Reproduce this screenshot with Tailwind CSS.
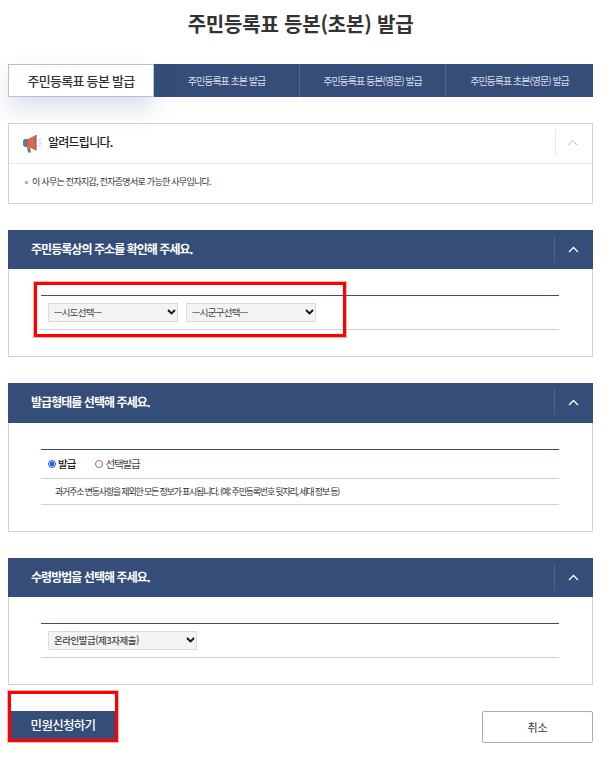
<!DOCTYPE html>
<html lang="ko">
<head>
  <meta charset="UTF-8">
  <title>주민등록표 등본(초본) 발급</title>
  <script src="https://cdn.jsdelivr.net/npm/@tailwindcss/browser@4"></script>
</head>
<body class="bg-white overflow-hidden font-['Noto_Sans_CJK_KR','Noto_Sans',sans-serif] text-[#222]">
  <div class="relative w-[616px] h-[760px] pl-2 pr-[23px]">
    <h1 class="h-[64px] pt-[7px] text-center text-[20px] leading-[34px] font-bold tracking-[-0.2px] text-[#333]">주민등록표 등본(초본) 발급</h1>

    <!-- tabs -->
    <div class="flex h-[33px] bg-[#344d79] text-[10px] tracking-[-1px] text-[#d8dee9]">
      <div class="w-[146px] flex items-center justify-center bg-white border border-[#b2c2de] text-[13px] font-medium tracking-[-0.7px] text-[#333] shadow-[0_12px_24px_rgba(52,77,121,0.18)]">주민등록표 등본 발급</div>
      <div class="w-[146px] flex items-center justify-center border-r border-[#4d6590]">주민등록표 초본 발급</div>
      <div class="w-[146px] flex items-center justify-center border-r border-[#4d6590]">주민등록표 등본(영문) 발급</div>
      <div class="flex-1 flex items-center justify-center">주민등록표 초본(영문) 발급</div>
    </div>

    <!-- notice -->
    <div class="mt-[26px] h-[81px] border border-[#d2d2d2]">
      <div class="h-[40px] flex items-center border-b border-[#e8e8e8]">
        <svg class="ml-[13px] w-[21px] h-[20px]" viewBox="0 0 21 20">
          <path d="M1 7.5 C1 6 2 5 3.5 5 L6 5 L6 13 L3.5 13 C2 13 1 12 1 10.5 Z" fill="#6d7683"/>
          <path d="M6 5 L13 1.5 L13 16 L6 13 Z" fill="#e8633f"/>
          <path d="M13 1 L14.6 1 L14.6 16.5 L13 16.5 Z" fill="#6d7683"/>
          <path d="M5 13 L8 13.5 L9 18.5 L6 18.5 Z" fill="#6d7683"/>
          <path d="M16.5 6.5 L19 5 M17 9 L20 9 M16.5 11.5 L19 13" stroke="#c4c8ce" stroke-width="1" fill="none"/>
        </svg>
        <span class="ml-[5px] -mt-[3px] text-[12px] font-medium tracking-[-0.75px]">알려드립니다.</span>
        <div class="ml-auto flex items-center h-[26px] w-[37px] border-l border-[#e8e8e8] justify-center pr-[3px] -mt-[2px]">
          <svg class="w-[11px] h-[7px]" viewBox="0 0 11 7"><path d="M1 6 L5.5 1.5 L10 6" fill="none" stroke="#bdbdbd" stroke-width="1"/></svg>
        </div>
      </div>
      <div class="pl-[16px] pt-[11px] flex items-center text-[9px] leading-[14px] tracking-[-0.72px] text-[#333]">
        <span class="w-[3px] h-[3px] bg-[#b5b5b5] mr-[4px]"></span>이 사무는 전자지갑, 전자증명서로 가능한 사무입니다.
      </div>
    </div>

    <!-- address -->
    <section class="mt-[26px] h-[127px] border-x border-b border-[#d2d2d2]">
      <div class="-mx-px h-[39px] flex items-center bg-[#344d79] text-white">
        <h2 class="pl-[23px] -mt-[1px] text-[12px] font-bold tracking-[-0.95px]">주민등록상의 주소를 확인해 주세요.</h2>
        <div class="ml-auto flex items-center justify-center h-[26px] w-[39px] border-l border-[#4d6590] pr-[2px]">
          <svg class="w-[11px] h-[7px]" viewBox="0 0 11 7"><path d="M1 6 L5.5 1.5 L10 6" fill="none" stroke="#fff" stroke-width="1.3"/></svg>
        </div>
      </div>
      <div class="ml-[32px] mr-[33px] mt-[26px] border-t border-[#344d79]">
        <div class="h-[34px] flex items-start gap-2 pt-[7px] pl-[7px] border-b border-[#d2d2d2]">
          <div class="relative w-[130px] h-[19px]">
            <select class="block appearance-none w-full h-full bg-[#f3f3f3] border border-[#dcdcdc] text-[9.5px] tracking-[-0.75px] text-[#444] pl-[5px]"><option>---시도선택---</option></select>
            <svg class="absolute right-[2px] top-[6px] w-[9px] h-[6px] pointer-events-none" viewBox="0 0 9 6"><path d="M1 1 L4.5 4.5 L8 1" fill="none" stroke="#111" stroke-width="1.8"/></svg>
          </div>
          <div class="relative w-[130px] h-[19px]">
            <select class="block appearance-none w-full h-full bg-[#f3f3f3] border border-[#dcdcdc] text-[9.5px] tracking-[-0.75px] text-[#444] pl-[5px]"><option>---시군구선택---</option></select>
            <svg class="absolute right-[2px] top-[6px] w-[9px] h-[6px] pointer-events-none" viewBox="0 0 9 6"><path d="M1 1 L4.5 4.5 L8 1" fill="none" stroke="#111" stroke-width="1.8"/></svg>
          </div>
        </div>
      </div>
    </section>

    <!-- issue type -->
    <section class="mt-[26px] h-[149px] border-x border-b border-[#d2d2d2]">
      <div class="-mx-px h-[40px] flex items-center bg-[#344d79] text-white">
        <h2 class="pl-[23px] -mt-[2px] text-[12px] font-bold tracking-[-0.95px]">발급형태를 선택해 주세요.</h2>
        <div class="ml-auto flex items-center justify-center h-[26px] w-[39px] border-l border-[#4d6590] pr-[2px] -mt-[2px]">
          <svg class="w-[11px] h-[7px]" viewBox="0 0 11 7"><path d="M1 6 L5.5 1.5 L10 6" fill="none" stroke="#fff" stroke-width="1.3"/></svg>
        </div>
      </div>
      <div class="ml-[32px] mr-[33px] mt-[26px] border-t border-[#344d79]">
        <div class="h-[29px] flex items-center pl-[7px] border-b border-[#d2d2d2] text-[10.5px] tracking-[-0.9px]">
          <input type="radio" name="kind" checked class="w-[8px] h-[8px] m-0 accent-blue-600">
          <span class="ml-[2px] font-medium text-[#222]">발급</span>
          <input type="radio" name="kind" class="ml-[19px] w-[8px] h-[8px] m-0">
          <span class="ml-[3px] tracking-[-1.2px] text-[#444]">선택발급</span>
        </div>
        <div class="h-[26px] flex items-center pl-[14px] border-b border-[#d2d2d2] text-[9px] tracking-[-1.2px] text-[#333]">과거주소 변동사항을 제외한 모든 정보가 표시됩니다. (예: 주민등록번호 뒷자리, 세대 정보 등)</div>
      </div>
    </section>

    <!-- receive method -->
    <section class="mt-[26px] h-[127px] border-x border-b border-[#d2d2d2]">
      <div class="-mx-px h-[39px] flex items-center bg-[#344d79] text-white">
        <h2 class="pl-[23px] -mt-[2px] text-[12px] font-bold tracking-[-0.95px]">수령방법을 선택해 주세요.</h2>
        <div class="ml-auto flex items-center justify-center h-[26px] w-[39px] border-l border-[#4d6590] pr-[2px]">
          <svg class="w-[11px] h-[7px]" viewBox="0 0 11 7"><path d="M1 6 L5.5 1.5 L10 6" fill="none" stroke="#fff" stroke-width="1.3"/></svg>
        </div>
      </div>
      <div class="ml-[32px] mr-[33px] mt-[26px] border-t border-[#344d79]">
        <div class="h-[34px] flex items-start pt-[7px] pl-[7px] border-b border-[#d2d2d2]">
          <div class="relative w-[149px] h-[19px]">
            <select class="block appearance-none w-full h-full bg-[#f3f3f3] border border-[#dcdcdc] text-[9.5px] tracking-[-0.5px] text-[#444] font-medium pl-[5px]"><option>온라인발급(제3자제출)</option></select>
            <svg class="absolute right-[2px] top-[6px] w-[9px] h-[6px] pointer-events-none" viewBox="0 0 9 6"><path d="M1 1 L4.5 4.5 L8 1" fill="none" stroke="#111" stroke-width="1.8"/></svg>
          </div>
        </div>
      </div>
    </section>

    <!-- buttons -->
    <div class="mt-[26px] flex items-start justify-between">
      <button class="ml-[2px] w-[106px] h-[29px] bg-[#344d79] text-white text-[12.5px] font-medium tracking-[-0.7px]">민원신청하기</button>
      <button class="w-[111px] h-[32px] bg-white border border-[#ababab] rounded-[2px] text-[11px] text-[#333]">취소</button>
    </div>

    <!-- red highlight boxes -->
    <div class="absolute left-[34px] top-[282px] w-[312px] h-[55px] border-[3px] border-[#f00] shadow-[0_0_0_1px_rgba(255,0,0,0.3)] pointer-events-none"></div>
    <div class="absolute left-[8px] top-[691px] w-[110px] h-[51px] border-[3px] border-[#f00] shadow-[0_0_0_1px_rgba(255,0,0,0.3)] pointer-events-none"></div>
  </div>
</body>
</html>
